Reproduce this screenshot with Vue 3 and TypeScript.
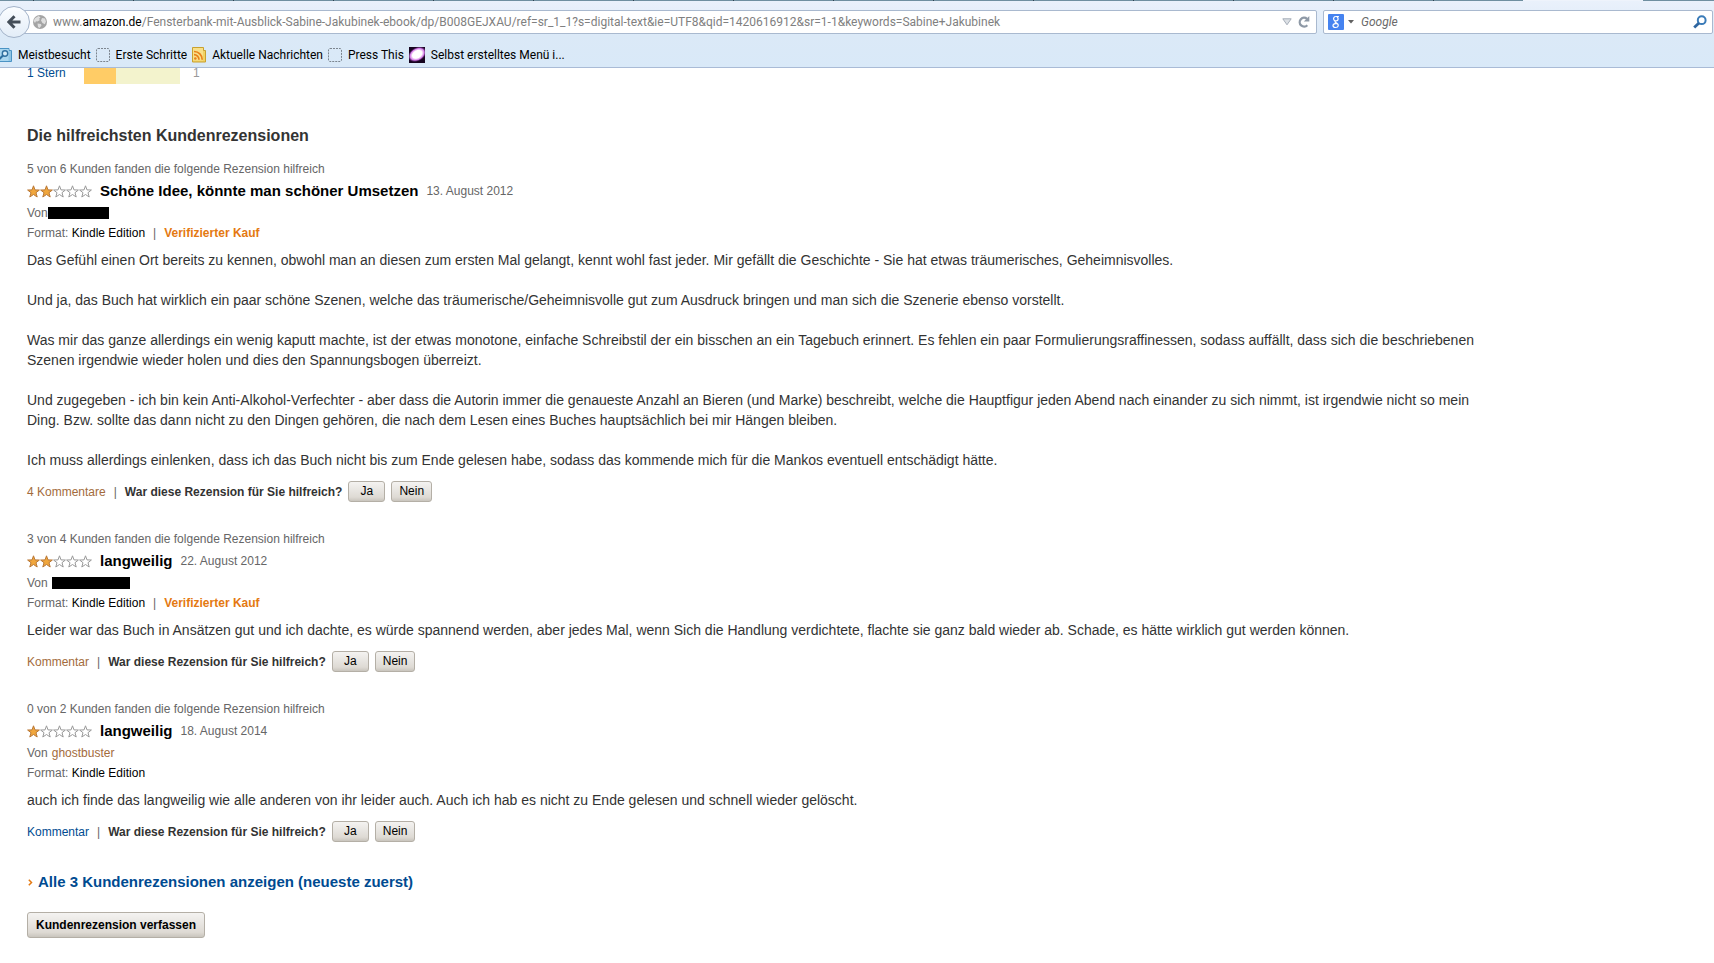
<script setup lang="ts">
import { ref } from 'vue'

interface Review {
  helpful: string
  stars: number
  title: string
  date: string
  author?: string
  redaction?: string
  verified: boolean
  paragraphs: string[]
  comments: string
  visited: boolean
}

const urlHost = 'amazon.de'
const urlPath =
  '/Fensterbank-mit-Ausblick-Sabine-Jakubinek-ebook/dp/B008GEJXAU/ref=sr_1_1?s=digital-text&ie=UTF8&qid=1420616912&sr=1-1&keywords=Sabine+Jakubinek'
const url = ref('www.' + urlHost + urlPath)
const editing = ref(false)
const query = ref('')

const bookmarks = [
  { label: 'Meistbesucht', icon: 'folder' },
  { label: 'Erste Schritte', icon: 'blank' },
  { label: 'Aktuelle Nachrichten', icon: 'feed' },
  { label: 'Press This', icon: 'blank' },
  { label: 'Selbst erstelltes Menü i...', icon: 'galaxy' },
]

const reviews: Review[] = [
  {
    helpful: '5 von 6 Kunden fanden die folgende Rezension hilfreich',
    stars: 2,
    title: 'Schöne Idee, könnte man schöner Umsetzen',
    date: '13. August 2012',
    redaction: 'short',
    verified: true,
    paragraphs: [
      'Das Gefühl einen Ort bereits zu kennen, obwohl man an diesen zum ersten Mal gelangt, kennt wohl fast jeder. Mir gefällt die Geschichte - Sie hat etwas träumerisches, Geheimnisvolles.',
      'Und ja, das Buch hat wirklich ein paar schöne Szenen, welche das träumerische/Geheimnisvolle gut zum Ausdruck bringen und man sich die Szenerie ebenso vorstellt.',
      'Was mir das ganze allerdings ein wenig kaputt machte, ist der etwas monotone, einfache Schreibstil der ein bisschen an ein Tagebuch erinnert. Es fehlen ein paar Formulierungsraffinessen, sodass auffällt, dass sich die beschriebenen Szenen irgendwie wieder holen und dies den Spannungsbogen überreizt.',
      'Und zugegeben - ich bin kein Anti-Alkohol-Verfechter - aber dass die Autorin immer die genaueste Anzahl an Bieren (und Marke) beschreibt, welche die Hauptfigur jeden Abend nach einander zu sich nimmt, ist irgendwie nicht so mein Ding. Bzw. sollte das dann nicht zu den Dingen gehören, die nach dem Lesen eines Buches hauptsächlich bei mir Hängen bleiben.',
      'Ich muss allerdings einlenken, dass ich das Buch nicht bis zum Ende gelesen habe, sodass das kommende mich für die Mankos eventuell entschädigt hätte.',
    ],
    comments: '4 Kommentare',
    visited: true,
  },
  {
    helpful: '3 von 4 Kunden fanden die folgende Rezension hilfreich',
    stars: 2,
    title: 'langweilig',
    date: '22. August 2012',
    redaction: 'long',
    verified: true,
    paragraphs: [
      'Leider war das Buch in Ansätzen gut und ich dachte, es würde spannend werden, aber jedes Mal, wenn Sich die Handlung verdichtete, flachte sie ganz bald wieder ab. Schade, es hätte wirklich gut werden können.',
    ],
    comments: 'Kommentar',
    visited: true,
  },
  {
    helpful: '0 von 2 Kunden fanden die folgende Rezension hilfreich',
    stars: 1,
    title: 'langweilig',
    date: '18. August 2014',
    author: 'ghostbuster',
    verified: false,
    paragraphs: [
      'auch ich finde das langweilig wie alle anderen von ihr leider auch. Auch ich hab es nicht zu Ende gelesen und schnell wieder gelöscht.',
    ],
    comments: 'Kommentar',
    visited: false,
  },
]
</script>

<template>
  <div class="window">
    <header class="chrome">
      <div class="tabs"><span class="active-tab"></span></div>
      <div class="nav">
        <button class="back" type="button" aria-label="Zurück">
          <svg width="14" height="14" viewBox="0 0 14 14">
            <path d="M7.5 1.2 1.8 7l5.7 5.8M2 7h11.5" fill="none" stroke="#444e59" stroke-width="3" />
          </svg>
        </button>
        <div class="url-bar">
          <svg class="globe" width="14" height="14" viewBox="0 0 14 14">
            <circle cx="7" cy="7" r="7" fill="#a4a4a4" />
            <path d="M2 3.2 5.5 1l2 1.2L6 4l1 1-2.5 1.5L3 6.200 2 8 .6 6zM9 3l3 .6 1 3-1.200 2.600L9.500 8 8 5.500zM4.500 8.500 8 9l.5 1.500L6.500 13 5 12z" fill="#dedede" />
          </svg>
          <div class="url-field">
            <input
              class="url-input"
              aria-label="Adresse"
              :value="editing ? url : ''"
              @focus="editing = true"
              @blur="editing = false"
              @input="url = ($event.target as HTMLInputElement).value"
            />
            <span v-if="!editing" class="url-text">www.<span class="host">{{ urlHost }}</span>{{ urlPath }}</span>
          </div>
          <button class="plain" type="button" aria-label="Verlauf">
            <svg width="10" height="8" viewBox="0 0 10 8">
              <path d="M.8.8h8.400L5 6.800z" fill="#dce0e5" stroke="#a5adb8" />
            </svg>
          </button>
          <button class="plain" type="button" aria-label="Neu laden">
            <svg width="12" height="12" viewBox="0 0 12 12">
              <path d="M9.300 9.200A4.400 4.400 0 1 1 9 2.800" fill="none" stroke="#8e99a6" stroke-width="2.300" />
              <path d="M11.300 0v5.500H5.800z" fill="#8e99a6" />
            </svg>
          </button>
        </div>
        <div class="search-bar">
          <button class="engine" type="button" aria-label="Suchmaschine wählen">
            <svg width="16" height="16" viewBox="0 0 16 16">
              <rect width="16" height="16" rx="1" fill="#4583f0" />
              <path d="M9.600 2.500H7.500a2.200 2.200 0 1 0 .6 4.400c1.500 0 2-.9 2-2.100 0-1-.4-1.600-1.200-2.300h2M7.300 7c-.8 1 .1 1.500 1.300 2.100 2.800 1.400 1.900 4.400-1 4.400-3.300 0-3.600-3.300-.2-3.800l1.200-.1" fill="none" stroke="#fff" stroke-width="1.200" />
            </svg>
            <svg width="6" height="4" viewBox="0 0 6 4"><path d="M0 0h6L3 3.500z" fill="#606060" /></svg>
          </button>
          <input v-model="query" class="search-input" type="text" placeholder="Google" aria-label="Suchen" />
          <button class="plain" type="button" aria-label="Suche starten">
            <svg width="14" height="14" viewBox="0 0 14 14">
              <circle cx="8.700" cy="5.200" r="3.900" fill="none" stroke="#3a7bb8" stroke-width="2" />
              <path d="M6 8 1.200 12.600" stroke="#2f66a0" stroke-width="2.800" />
            </svg>
          </button>
        </div>
      </div>
      <nav class="bookmarks" aria-label="Lesezeichen">
        <a v-for="mark in bookmarks" :key="mark.label" href="#" :class="['bookmark', mark.icon]">
          <svg v-if="mark.icon === 'folder'" width="12" height="16" viewBox="4 0 12 16">
            <path d="M0 1.500h13v2h2.500v11H0z" fill="#8fc4e4" stroke="#4a93c4" />
            <path d="M1 2h11.500v12H1z" fill="#a9d6ef" />
            <circle cx="9" cy="6.500" r="2.700" fill="#d6ecf8" stroke="#2f6f9f" stroke-width="1.400" />
            <path d="m7 8.500-3.500 3.500" stroke="#2f6f9f" stroke-width="2" />
          </svg>
          <svg v-else-if="mark.icon === 'blank'" width="14" height="16" viewBox="0 0 14 16">
            <rect x=".5" y="1.500" width="13" height="13" rx="1.500" fill="none" stroke="#7c858f" stroke-dasharray="2 1" />
          </svg>
          <svg v-else-if="mark.icon === 'feed'" width="14" height="16" viewBox="0 0 14 16">
            <path d="M.5.500h11v3h2v11.500H.5z" fill="#f2d264" stroke="#c9a12f" />
            <path d="M1 1h10v12.500H1z" fill="#f8e08a" />
            <circle cx="3.300" cy="11.500" r="1.300" fill="#e8801c" />
            <path d="M2 7.700a5 5 0 0 1 5 5M2 4.500a8 8 0 0 1 8.200 8.200" fill="none" stroke="#e8801c" stroke-width="1.700" />
          </svg>
          <svg v-else width="16" height="16" viewBox="0 0 16 16">
            <defs>
              <radialGradient id="glow">
                <stop offset=".5" stop-color="#fff" />
                <stop offset=".75" stop-color="#d47be8" />
                <stop offset="1" stop-color="#5b1670" stop-opacity="0" />
              </radialGradient>
            </defs>
            <rect width="16" height="16" fill="#16041f" />
            <ellipse cx="8.500" cy="7.500" rx="10" ry="7" transform="rotate(-30 8 8)" fill="url(#glow)" />
          </svg>
          {{ mark.label }}
        </a>
      </nav>
    </header>

    <main class="page">
      <div class="histogram">
        <a class="blue" href="#">1 Stern</a>
        <span class="bar"><span class="fill"></span></span>
        <span class="count">1</span>
      </div>

      <h2>Die hilfreichsten Kundenrezensionen</h2>

      <article v-for="review in reviews" :key="review.date" class="review">
        <div class="line">{{ review.helpful }}</div>
        <div class="headline">
          <span class="stars" role="img" :aria-label="review.stars + ' von 5 Sternen'">
            <svg v-for="n in 5" :key="n" width="13" height="13" viewBox="0 0 13 13">
              <path
                d="M6.500.8 8 4.900l4.400.1L9 7.700l1.200 4.300-3.700-2.500L2.800 12 4 7.700.6 5 5 4.900z"
                :class="n <= review.stars ? 'star-on' : 'star-off'"
              />
            </svg>
          </span>
          <h3>{{ review.title }}</h3>
          <span>{{ review.date }}</span>
        </div>
        <div class="line author">
          Von
          <a v-if="review.author" class="brown" href="#">{{ review.author }}</a>
          <span v-else :class="['redaction', review.redaction]"></span>
        </div>
        <div class="line meta">
          <span>Format: <span class="edition">Kindle Edition</span></span>
          <template v-if="review.verified">
            <span>|</span>
            <span class="verified">Verifizierter Kauf</span>
          </template>
        </div>
        <div class="body">
          <p v-for="text in review.paragraphs" :key="text">{{ text }}</p>
        </div>
        <div class="actions">
          <a :class="review.visited ? 'brown' : 'blue'" href="#">{{ review.comments }}</a>
          <span class="divider">|</span>
          <strong>War diese Rezension für Sie hilfreich?</strong>
          <button class="vote" type="button">Ja</button>
          <button class="vote" type="button">Nein</button>
        </div>
      </article>

      <div class="all">
        <svg width="5" height="7" viewBox="0 0 5 7"><path d="m.8.800 2.700 2.700L.8 6.200" fill="none" stroke="#e47911" stroke-width="1.500" /></svg>
        <a class="blue" href="#">Alle 3 Kundenrezensionen anzeigen (neueste zuerst)</a>
      </div>
      <button class="write" type="button">Kundenrezension verfassen</button>
    </main>
  </div>
</template>

<style>
body {
  margin: 0;
  background: #fff;
}
</style>

<style scoped>
.window {
  min-height: 100vh;
  font: 12px/20px "Liberation Sans", Arial, sans-serif;
  color: #666;
  overflow: hidden;
}
a {
  text-decoration: none;
}
button {
  font-family: inherit;
  cursor: pointer;
}
.chrome {
  position: relative;
  background: linear-gradient(#eaf1fb, #dbe9f7 36px, #d9e9f8);
  border-bottom: 1px solid #a9bbd6;
  font: 12px/18px Roboto, "Open Sans", sans-serif;
}
.tabs {
  display: flex;
  justify-content: flex-end;
  height: 1px;
  padding-right: 71px;
  background: repeating-linear-gradient(90deg, #6f8fa0 0 33px, #2f4350 33px 34px, #6f8fa0 34px 100px);
}
.active-tab {
  width: 120px;
  background: #eef3fb;
}
.nav {
  display: flex;
  align-items: center;
  gap: 6px;
  height: 41px;
}
.back {
  display: flex;
  align-items: center;
  justify-content: center;
  box-sizing: border-box;
  width: 32px;
  height: 32px;
  margin: 0 -10px 0 -2px;
  padding: 0;
  border: 1px solid #a3b3c9;
  border-radius: 50%;
  background: linear-gradient(#fbfdff, #e3edf8);
  z-index: 1;
}
.url-bar,
.search-bar {
  display: flex;
  align-items: center;
  box-sizing: border-box;
  height: 24px;
  border: 1px solid #a9b9cf;
  border-radius: 2px;
  background: #fff;
}
.url-bar {
  flex: 1;
  gap: 6px;
  margin-left: -6px;
  padding: 0 6px 0 12px;
}
.url-field {
  position: relative;
  flex: 1;
  min-width: 0;
}
.url-input,
.search-input {
  display: block;
  width: 100%;
  height: 18px;
  box-sizing: border-box;
  padding: 0;
  border: 0;
  outline: 0;
  background: none;
  font: inherit;
  color: #444;
}
.url-text {
  position: absolute;
  inset: 0;
  overflow: hidden;
  white-space: nowrap;
  color: #808080;
  pointer-events: none;
}
.host {
  color: #000;
}
.plain,
.engine {
  display: flex;
  align-items: center;
  padding: 0;
  border: 0;
  background: none;
}
.search-bar {
  width: 390px;
  margin-right: 1px;
  padding: 0 5px 0 4px;
}
.engine {
  gap: 4px;
  margin-right: 7px;
}
.search-input {
  flex: 1;
  font-style: italic;
}
.search-input::placeholder {
  color: #6a6a6a;
  opacity: 1;
}
.bookmarks {
  display: flex;
  align-items: center;
  gap: 5px;
  height: 25px;
}
.bookmark {
  display: flex;
  align-items: center;
  gap: 6px;
  color: #000;
  white-space: nowrap;
}
.page {
  padding: 0 27px 24px;
}
.histogram {
  display: flex;
  height: 16px;
  margin-bottom: 42px;
  line-height: 10px;
}
.histogram .blue {
  width: 57px;
}
.bar {
  width: 96px;
  margin-right: 13px;
  background: #f3f3cd;
}
.fill {
  display: block;
  width: 33%;
  height: 100%;
  background: #fc6;
}
.count {
  color: #999;
}
h2 {
  margin: 0 0 13px;
  font-size: 16px;
  line-height: 20px;
  color: #333;
}
.review {
  margin-bottom: 27px;
}
.headline {
  display: flex;
  align-items: center;
  gap: 8px;
  height: 24px;
}
.stars {
  display: flex;
}
.star-on {
  fill: #f0a63c;
  stroke: #b87838;
}
.star-off {
  fill: #fff;
  stroke: #999;
}
h3 {
  margin: 0;
  font-size: 15px;
  color: #000;
}
.author {
  display: flex;
  align-items: center;
  gap: 4px;
}
.redaction {
  height: 12px;
  background: #000;
}
.short {
  width: 61px;
  margin-left: -4px;
}
.long {
  width: 78px;
}
.meta {
  display: flex;
  gap: 8px;
}
.edition {
  color: #000;
}
.verified {
  font-weight: bold;
  color: #e47911;
}
.body {
  max-width: 1465px;
  margin: 7px 0 11px;
  font-size: 14px;
  color: #333;
}
.body p {
  margin: 0 0 20px;
}
.body p:last-child {
  margin-bottom: 0;
}
.actions {
  display: flex;
  align-items: center;
  gap: 6px;
  height: 21px;
  color: #333;
}
.divider {
  margin: 0 2px;
  color: #666;
}
.brown {
  color: #a36b3c;
}
.blue {
  color: #004b91;
}
.vote,
.write {
  border: 1px solid #b4afa6;
  border-radius: 3px;
  background: linear-gradient(#f4f3f1, #dedad4 80%, #c9c5bd);
  color: #000;
}
.vote {
  height: 21px;
  padding: 0 7px 1px;
  font-size: 12px;
  line-height: 18px;
  min-width: 37px;
}
.all {
  display: flex;
  align-items: center;
  gap: 5px;
  margin: 30px 0 20px 1px;
  font-size: 15px;
  font-weight: bold;
}
.write {
  display: block;
  height: 26px;
  padding: 0 8px 1px;
  font-size: 12px;
  font-weight: bold;
}
</style>
